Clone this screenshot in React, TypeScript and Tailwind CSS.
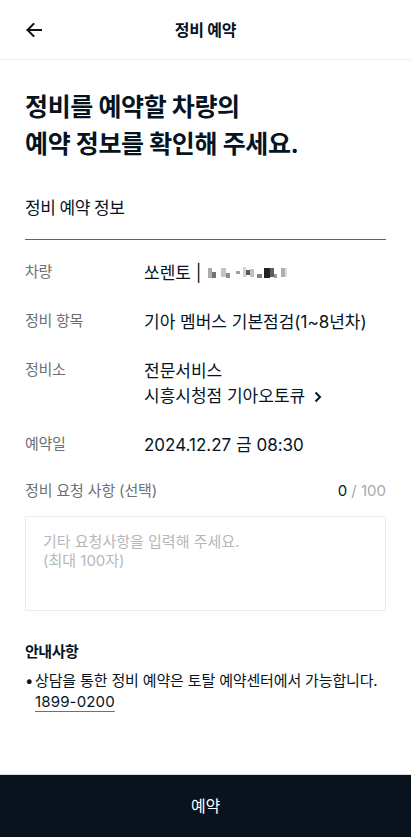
import { useState } from "react";

const font = "font-['Inter','Noto_Sans_CJK_KR',sans-serif]";

function BackArrow() {
  return (
    <svg width="16" height="14" viewBox="0 0 16 14" fill="none">
      <path
        d="M15 7H1.5M7.5 1 1.5 7l6 6"
        stroke="#05141f"
        strokeWidth="2"
        strokeLinecap="square"
      />
    </svg>
  );
}

function Chevron() {
  return (
    <svg width="8" height="12" viewBox="0 0 8 12" fill="none" className="ml-[9px]">
      <path d="M1.5 1.5 6 6l-4.5 4.5" stroke="#05141f" strokeWidth="2" />
    </svg>
  );
}

// blurred plate number
function Plate() {
  const blocks = [
    { w: "w-[4px]", h: "h-[10px]", c: "bg-[#a9acaf]", m: "ml-[0px]", a: "self-center" },
    { w: "w-[4px]", h: "h-[6px]", c: "bg-[#6e7276]", m: "ml-[0px]", a: "self-end" },
    { w: "w-[5px]", h: "h-[9px]", c: "bg-[#c2c4c6]", m: "ml-[5px]", a: "self-center" },
    { w: "w-[4px]", h: "h-[5px]", c: "bg-[#8a8e92]", m: "ml-[0px]", a: "self-end" },
    { w: "w-[4px]", h: "h-[3px]", c: "bg-[#9ea1a4]", m: "ml-[6px]", a: "self-center" },
    { w: "w-[3px]", h: "h-[10px]", c: "bg-[#d0d2d4]", m: "ml-[3px]", a: "self-start" },
    { w: "w-[4px]", h: "h-[5px]", c: "bg-[#555a5f]", m: "ml-[0px]", a: "self-center" },
    { w: "w-[4px]", h: "h-[8px]", c: "bg-[#bfc1c3]", m: "ml-[0px]", a: "self-center" },
    { w: "w-[5px]", h: "h-[4px]", c: "bg-[#7d8185]", m: "ml-[3px]", a: "self-end" },
    { w: "w-[6px]", h: "h-[10px]", c: "bg-[#1f2428]", m: "ml-[2px]", a: "self-center" },
    { w: "w-[4px]", h: "h-[9px]", c: "bg-[#5a5f63]", m: "ml-[0px]", a: "self-center" },
    { w: "w-[3px]", h: "h-[4px]", c: "bg-[#9a9da0]", m: "ml-[0px]", a: "self-end" },
    { w: "w-[4px]", h: "h-[9px]", c: "bg-[#adb0b3]", m: "ml-[4px]", a: "self-center" },
    { w: "w-[2px]", h: "h-[9px]", c: "bg-[#dcdddf]", m: "ml-[0px]", a: "self-center" },
  ];
  return (
    <span className="ml-[7px] inline-flex h-[11px] translate-y-[-1px]">
      {blocks.map((b, i) => (
        <span key={i} className={`${b.w} ${b.h} ${b.c} ${b.m} ${b.a} block`} />
      ))}
    </span>
  );
}

function Row({ label, children }: { label: string; children: React.ReactNode }) {
  return (
    <div className="flex items-start">
      <div className="w-[119px] shrink-0 text-[15px] leading-[22px] text-[#6b7075] tracking-[-0.02em]">
        {label}
      </div>
      <div className="text-[17px] leading-[25px] text-[#05141f]">{children}</div>
    </div>
  );
}

export default function App() {
  const [memo, setMemo] = useState("");

  return (
    <div className={`${font} min-h-[837px] w-full bg-white flex flex-col text-[#05141f]`}>
      <header className="h-[60px] shrink-0 border-b border-[#eeeff0] flex items-center px-[26px]">
        <div className="w-[40px]">
          <BackArrow />
        </div>
        <h1 className="flex-1 text-center text-[16px] font-semibold tracking-[-0.02em]">정비 예약</h1>
        <div className="w-[40px]" />
      </header>

      <main className="flex-1 px-[25px]">
        <h2 className="pt-[29px] text-[25px] leading-[37px] font-bold tracking-[-0.015em]">
          정비를 예약할 차량의
          <br />
          예약 정보를 확인해 주세요.
        </h2>

        <div className="mt-[33px] pb-[19px] border-b border-[#5f6468] text-[17px] leading-[24px] tracking-[-0.03em]">
          정비 예약 정보
        </div>

        <div className="mt-[21px] flex flex-col gap-[24px]">
          <Row label="차량">
            <span className="flex items-center">
              쏘렌토 |
              <Plate />
            </span>
          </Row>
          <Row label="정비 항목">기아 멤버스 기본점검(1~8년차)</Row>
          <Row label="정비소">
            전문서비스
            <br />
            <span className="inline-flex items-center">
              시흥시청점 기아오토큐
              <Chevron />
            </span>
          </Row>
          <Row label="예약일">2024.12.27 금 08:30</Row>
        </div>

        <div className="mt-[23px] flex items-center justify-between">
          <span className="text-[15px] leading-[20px] text-[#6b7075] tracking-[-0.01em]">
            정비 요청 사항 (선택)
          </span>
          <span className="text-[15px] leading-[20px]">
            <span className="text-[#05141f]">{memo.length}</span>
            <span className="text-[#a5a9ad]"> / 100</span>
          </span>
        </div>

        <textarea
          value={memo}
          onChange={(e) => setMemo(e.target.value.slice(0, 100))}
          placeholder={"기타 요청사항을 입력해 주세요.\n(최대 100자)"}
          className="mt-[15px] block w-full h-[95px] resize-none border border-[#ececec] px-[17px] pt-[15px] text-[15px] leading-[19px] outline-none placeholder:text-[#b4b8bb]"
        />

        <div className="mt-[30px] text-[15px] leading-[22px] font-bold tracking-[-0.03em]">안내사항</div>
        <div className="mt-[7px] flex text-[15px] leading-[21px] tracking-[-0.01em]">
          <span className="w-[10px] shrink-0">•</span>
          <div>
            상담을 통한 정비 예약은 토탈 예약센터에서 가능합니다.
            <br />
            <a
              href="#"
              className="underline decoration-[#6b7075] underline-offset-[4px] tracking-[0.01em]"
            >
              1899-0200
            </a>
          </div>
        </div>
      </main>

      <button className="h-[63px] shrink-0 w-full bg-[#08131e] border-t border-[#d9dcde] text-white text-[16px] tracking-[-0.02em]">
        예약
      </button>
    </div>
  );
}
